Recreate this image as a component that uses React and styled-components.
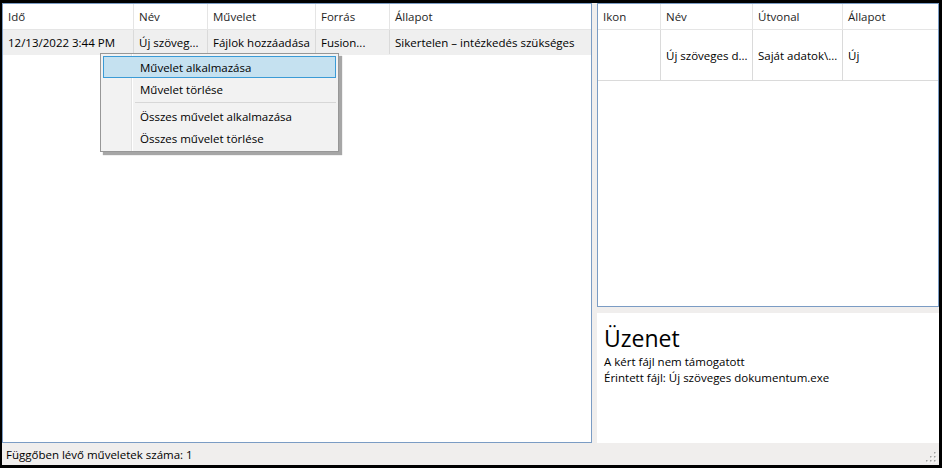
import React from 'react'
import styled, { createGlobalStyle } from 'styled-components'

const GlobalStyle = createGlobalStyle`
  html, body {
    margin: 0;
    padding: 0;
    background: #000;
  }
  body {
    font-family: "Open Sans", "Noto Sans", sans-serif;
    font-size: 11.5px;
    color: #000;
  }
`

const Window = styled.div`
  position: relative;
  margin: 3px 3px 0 2px;
  height: 462px;
  background: #f0eeed;
  display: flex;
  flex-direction: column;
`

const Main = styled.div`
  display: flex;
  gap: 5px;
  height: 440px;
`

const ListBox = styled.div`
  box-sizing: border-box;
  width: ${p => p.w}px;
  height: ${p => p.h || 440}px;
  border: 1px solid #7b9cc4;
  background: #fff;
  overflow: hidden;
`

const Side = styled.div`
  display: flex;
  flex-direction: column;
  gap: 6px;
  width: 342px;
`

const Row = styled.div`
  display: grid;
  grid-template-columns: ${p => p.cols};
  height: ${p => p.h}px;
  background: ${p => p.bg || '#fff'};
  border-bottom: 1px solid ${p => p.line || '#e5e5e5'};
`

const Cell = styled.div`
  display: flex;
  align-items: center;
  padding-left: 5px;
  border-right: 1px solid ${p => p.line || '#e5e5e5'};
  white-space: nowrap;
  overflow: hidden;
  color: ${p => (p.head ? '#1e1e1e' : '#000')};
  &:last-child {
    border-right: none;
  }
`

const Message = styled.div`
  flex: 1;
  background: #fff;
  padding: 11px 7px;
`

const Title = styled.div`
  font-size: 23px;
  line-height: 28px;
  margin-bottom: 2px;
`

const Line = styled.div`
  line-height: 16px;
`

const StatusBar = styled.div`
  height: 22px;
  display: flex;
  align-items: center;
  padding-left: 4px;
  font-size: 11.5px;
`

const Grip = styled.svg`
  position: absolute;
  right: 2px;
  bottom: 2px;
`

const Menu = styled.div`
  position: absolute;
  left: 98px;
  top: 50px;
  width: 239px;
  box-sizing: border-box;
  padding: 2px;
  background: #f2f2f2;
  border: 1px solid #979797;
  box-shadow: 3px 3px 1px rgba(0, 0, 0, 0.35);
  background-image: linear-gradient(to right, transparent 30px, #e2e2e2 30px, #e2e2e2 31px, #fff 31px, #fff 32px, transparent 32px);
`

const Item = styled.div`
  box-sizing: border-box;
  height: 22px;
  display: flex;
  align-items: center;
  padding-left: 36px;
  border: 1px solid ${p => (p.active ? '#3b9bd6' : 'transparent')};
  background: ${p => (p.active ? '#c5e1f0' : 'transparent')};
`

const Sep = styled.div`
  height: 1px;
  margin: 2px 0 2px 32px;
  background: #d7d7d7;
`

const leftCols = '131px 74px 108px 74px 1fr'
const rightCols = '63px 92px 90px 1fr'

function ResizeGrip() {
  const dots = [[10, 2], [10, 6], [6, 6], [10, 10], [6, 10], [2, 10]]
  return (
    <Grip width="13" height="13" viewBox="0 0 13 13">
      {dots.map(([x, y], i) => (
        <g key={i}>
          <rect x={x + 1} y={y + 1} width="1.5" height="1.5" fill="#fff" />
          <rect x={x} y={y} width="1.5" height="1.5" fill="#a0a0a0" />
        </g>
      ))}
    </Grip>
  )
}

export default function App() {
  return (
    <>
      <GlobalStyle />
      <Window>
        <Main>
          <ListBox w={590}>
            <Row cols={leftCols} h={25}>
              <Cell head>Idő</Cell>
              <Cell head>Név</Cell>
              <Cell head>Művelet</Cell>
              <Cell head>Forrás</Cell>
              <Cell head>Állapot</Cell>
            </Row>
            <Row cols={leftCols} h={24} bg="#efefef" line="#efefef">
              <Cell line="#dadada">12/13/2022 3:44 PM</Cell>
              <Cell line="#dadada">Új szöveg...</Cell>
              <Cell line="#dadada">Fájlok hozzáadása</Cell>
              <Cell line="#dadada">Fusion...</Cell>
              <Cell line="#dadada">Sikertelen – intézkedés szükséges</Cell>
            </Row>
          </ListBox>
          <Side>
            <ListBox w={342} h={304}>
              <Row cols={rightCols} h={25}>
                <Cell head>Ikon</Cell>
                <Cell head>Név</Cell>
                <Cell head>Útvonal</Cell>
                <Cell head>Állapot</Cell>
              </Row>
              <Row cols={rightCols} h={50} line="#dadada">
                <Cell line="#dadada"></Cell>
                <Cell line="#dadada">Új szöveges d...</Cell>
                <Cell line="#dadada">Saját adatok\...</Cell>
                <Cell line="#dadada">Új</Cell>
              </Row>
            </ListBox>
            <Message>
              <Title>Üzenet</Title>
              <Line>A kért fájl nem támogatott</Line>
              <Line>Érintett fájl: Új szöveges dokumentum.exe</Line>
            </Message>
          </Side>
        </Main>
        <StatusBar>Függőben lévő műveletek száma: 1</StatusBar>
        <ResizeGrip />
        <Menu>
          <Item active>Művelet alkalmazása</Item>
          <Item>Művelet törlése</Item>
          <Sep />
          <Item>Összes művelet alkalmazása</Item>
          <Item>Összes művelet törlése</Item>
        </Menu>
      </Window>
    </>
  )
}
